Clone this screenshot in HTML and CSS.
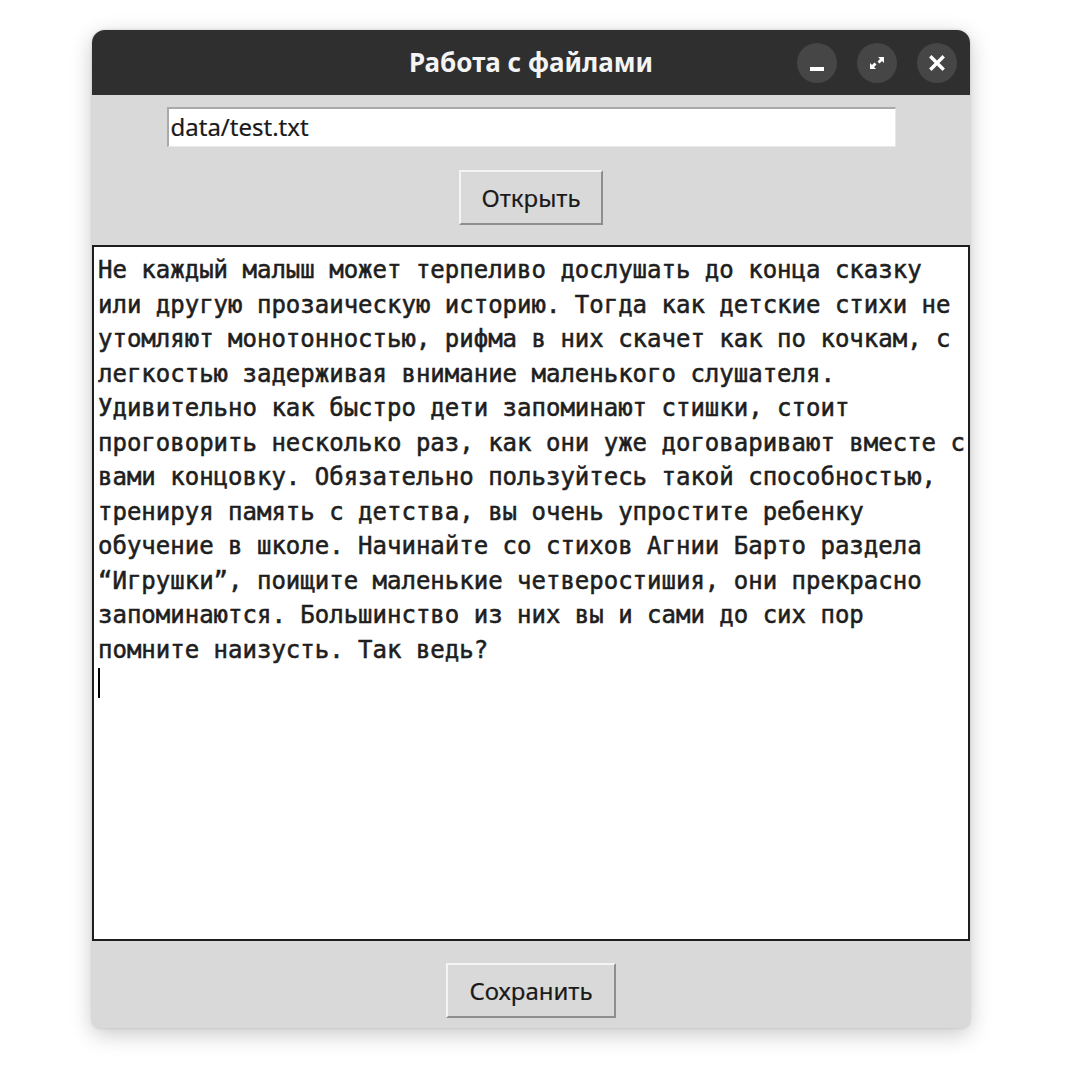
FILE: index.html
```html
<!DOCTYPE html>
<html lang="ru">
<head>
<meta charset="utf-8">
<title>Работа с файлами</title>
<link rel="stylesheet" href="styles.css">
</head>
<body>
<div class="window">
  <header class="titlebar">
    <div class="spacer"></div>
    <div class="title">Работа с файлами</div>
    <div class="controls">
      <span class="ctl"><svg width="40" height="40" viewBox="0 0 40 40"><rect x="13" y="24" width="14" height="4" fill="#fff"/></svg></span>
      <span class="ctl"><svg width="40" height="40" viewBox="0 0 40 40"><path d="M21 14h6v6l-2-2-2.5 2.5-2-2L23 16z M19 26h-6v-6l2 2 2.5-2.5 2 2L17 24z" fill="#fff"/></svg></span>
      <span class="ctl"><svg width="40" height="40" viewBox="0 0 40 40"><path d="M14.5 14.5l11 11M25.5 14.5l-11 11" stroke="#fff" stroke-width="3.4" stroke-linecap="square"/></svg></span>
    </div>
  </header>
  <section class="top">
    <div class="entry">data/test.txt</div>
    <button class="btn btn-open">Открыть</button>
  </section>
  <div class="editor"><div class="text">Не каждый малыш может терпеливо дослушать до конца сказку
или другую прозаическую историю. Тогда как детские стихи не
утомляют монотонностью, рифма в них скачет как по кочкам, с
легкостью задерживая внимание маленького слушателя.
Удивительно как быстро дети запоминают стишки, стоит
проговорить несколько раз, как они уже договаривают вместе с
вами концовку. Обязательно пользуйтесь такой способностью,
тренируя память с детства, вы очень упростите ребенку
обучение в школе. Начинайте со стихов Агнии Барто раздела
“Игрушки”, поищите маленькие четверостишия, они прекрасно
запоминаются. Большинство из них вы и сами до сих пор
помните наизусть. Так ведь?
<span class="caret"></span></div></div>
  <footer class="bottom">
    <button class="btn btn-save">Сохранить</button>
  </footer>
</div>
</body>
</html>
```
FILE: styles.css
```css
html, body {
  margin: 0;
  padding: 0;
  background: #ffffff;
}
body {
  width: 1080px;
  height: 1080px;
  overflow: hidden;
}
.window {
  margin: 30px 0 0 92px;
  width: 878px;
  background: #d9d9d9;
  border-radius: 13px 13px 8px 8px;
  box-shadow: 0 6px 22px rgba(0,0,0,0.22), 0 0 3px rgba(0,0,0,0.15);
  overflow: hidden;
}
.titlebar {
  height: 65px;
  background: #2f2f2f;
  display: grid;
  grid-template-columns: 1fr auto 1fr;
  align-items: center;
}
.title {
  font-family: "Noto Sans", "Open Sans", sans-serif;
  font-weight: 700;
  font-size: 26px;
  color: #f4f4f4;
  padding-bottom: 2px;
}
.controls {
  display: flex;
  justify-content: flex-end;
  gap: 20px;
  padding-right: 13px;
}
.ctl {
  width: 40px;
  height: 40px;
  border-radius: 50%;
  background: #464646;
  display: block;
}
.ctl svg { display: block; }
.top {
  display: flex;
  flex-direction: column;
  align-items: center;
  padding: 12px 0 20px;
  gap: 23px;
}
.entry {
  box-sizing: border-box;
  width: 729px;
  height: 40px;
  background: #fff;
  border-top: 2px solid #a9a9a9;
  border-left: 2px solid #a9a9a9;
  border-right: 1px solid #e8e8e8;
  border-bottom: 1px solid #e8e8e8;
  font-family: "Noto Sans", "Open Sans", sans-serif;
  font-size: 24px;
  color: #1a1a1a;
  padding-left: 2px;
  line-height: 35px;
  -webkit-text-stroke: 0.2px #1a1a1a;
}
.btn {
  box-sizing: border-box;
  height: 55px;
  background: #d9d9d9;
  border-top: 2px solid #f4f4f4;
  border-left: 2px solid #f4f4f4;
  border-right: 2px solid #8e8e8e;
  border-bottom: 2px solid #8e8e8e;
  font-family: "Noto Sans", "Open Sans", sans-serif;
  font-size: 24px;
  color: #1a1a1a;
  padding: 0;
  margin: 0;
  -webkit-text-stroke: 0.2px #1a1a1a;
}
.btn-open { width: 144px; }
.btn-save { width: 170px; }
.editor {
  box-sizing: border-box;
  height: 696px;
  background: #fff;
  border: 2px solid #1e1e1e;
  padding: 6px 0 0 4px;
}
.text {
  font-family: "DejaVu Sans Mono", monospace;
  font-size: 24px;
  line-height: 34.5px;
  color: #1e1e1e;
  white-space: pre;
  -webkit-text-stroke: 0.55px #1e1e1e;
}
.caret {
  display: inline-block;
  width: 2px;
  height: 30px;
  background: #000;
  vertical-align: -6px;
}
.bottom {
  display: flex;
  justify-content: center;
  padding: 22px 0 10px;
}
```
